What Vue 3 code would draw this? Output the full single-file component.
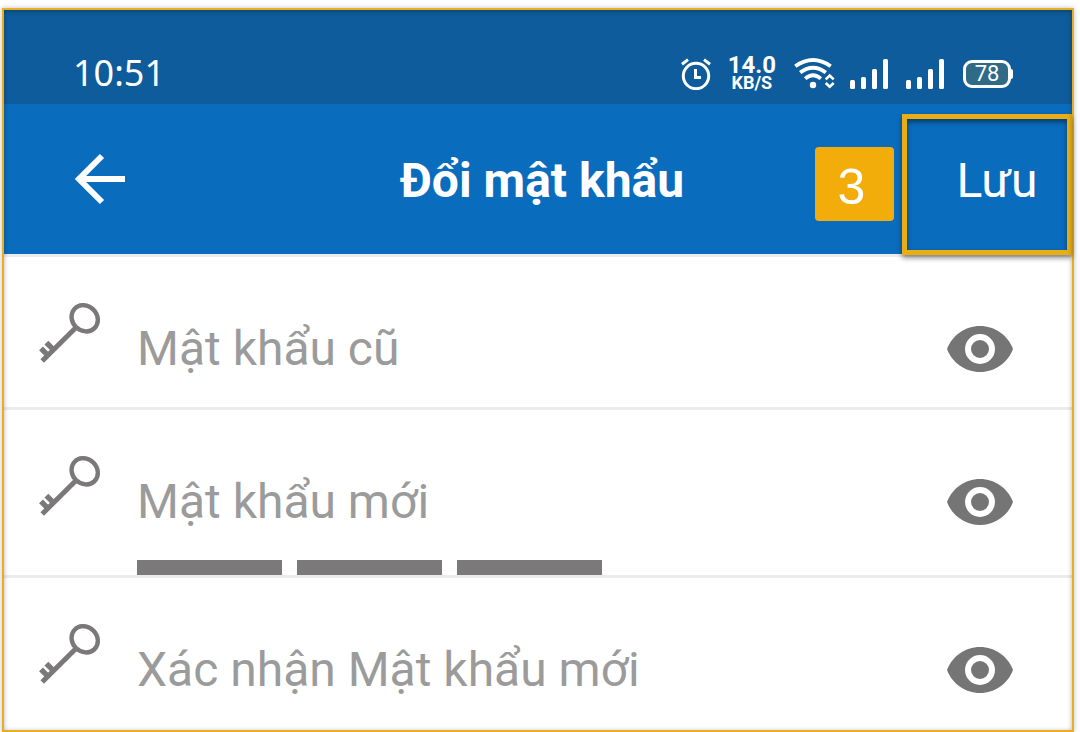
<script setup>
import { reactive } from 'vue'

const fields = reactive([
  { id: 'old-password', label: 'Mật khẩu cũ', value: '', visible: false, meter: false },
  { id: 'new-password', label: 'Mật khẩu mới', value: '', visible: false, meter: true },
  { id: 'confirm-password', label: 'Xác nhận Mật khẩu mới', value: '', visible: false, meter: false },
])
</script>

<template>
  <main class="screen">
    <div class="status">
      <time class="clock">10:51</time>
      <div class="indicators">
        <svg class="alarm" width="30" height="32" viewBox="0 0 30 32" fill="none" stroke="#fff" aria-hidden="true">
          <circle cx="15" cy="18" r="12.7" stroke-width="3" />
          <path d="M14.5 11v8.5H20" stroke-width="3" />
          <path d="M1 6.2L7 1.6M23 1.6L29 6.2" stroke-width="3" />
        </svg>
        <div class="speed">
          <span class="rate">14.0</span>
          <span class="unit">KB/S</span>
        </div>
        <svg class="wifi" width="41" height="32" viewBox="0 0 41 32" fill="none" stroke="#fff" aria-hidden="true">
          <path d="M1.3 8.2Q19 -4.2 36.7 8.2" stroke-width="3.8" />
          <path d="M6.2 14.6Q19 4.8 31.8 14.6" stroke-width="3.8" />
          <path d="M11.2 20.6Q19 14 26.8 20.6" stroke-width="3.8" />
          <circle cx="19" cy="27" r="3.2" fill="#fff" stroke="none" />
          <path d="M31.7 21.4l4-3.8 4 3.8M31.7 25l4 3.8 4-3.8" stroke-width="2.6" />
        </svg>
        <svg v-for="n in 2" :key="n" class="signal" width="38" height="30" viewBox="0 0 38 30" fill="#fff" aria-hidden="true">
          <rect x="0" y="21" width="5" height="9" rx="1.5" />
          <rect x="11" y="18" width="5" height="12" rx="1.5" />
          <rect x="22" y="10" width="5" height="20" rx="1.5" />
          <rect x="33" y="0" width="5" height="30" rx="1.5" />
        </svg>
        <div class="battery"><span class="level">78</span></div>
      </div>
    </div>

    <header class="bar">
      <button class="back" type="button" aria-label="Quay lại">
        <svg width="52" height="52" viewBox="0 0 52 52" fill="none" stroke="#fff" stroke-width="6" aria-hidden="true">
          <path d="M28 3L5 26l23 23M6 26h45" />
        </svg>
      </button>
      <h1 class="title">Đổi mật khẩu</h1>
      <div class="actions">
        <span class="step">3</span>
        <button class="save" type="submit" form="password-form">Lưu</button>
      </div>
    </header>

    <form id="password-form" class="form" @submit.prevent>
      <div v-for="f in fields" :key="f.id" class="row">
        <label class="key" :for="f.id" :aria-label="f.label">
          <svg width="62" height="60" viewBox="0 0 62 60" fill="none" stroke="#7a7878" aria-hidden="true">
            <ellipse cx="45.7" cy="15.3" rx="13.9" ry="12.3" stroke-width="4.4" transform="rotate(45 45.7 15.3)" />
            <path d="M37 24.5L3.2 58" stroke-width="5" />
            <path d="M7.400 39.700l8 8M2 45.300l8 8" stroke-width="5.400" />
          </svg>
        </label>
        <input :id="f.id" v-model="f.value" class="input" :type="f.visible ? 'text' : 'password'" :placeholder="f.label" />
        <button class="eye" type="button" :aria-label="'Hiện ' + f.label" @click="f.visible = !f.visible">
          <svg width="66" height="46" viewBox="0 0 66 46" aria-hidden="true">
            <path d="M0 23C5 9.500 18 0 33 0S61 9.500 66 23C61 36.500 48 46 33 46S5 36.500 0 23z" fill="#757575" />
            <circle cx="33" cy="23" r="12" fill="#757575" stroke="#fff" stroke-width="6" />
          </svg>
        </button>
        <div v-if="f.meter" class="meter">
          <span v-for="n in 3" :key="n" class="segment"></span>
        </div>
      </div>
    </form>
  </main>
</template>

<style>
body {
  background: #fff;
}
</style>

<style scoped>
.screen {
  position: relative;
  margin: 8px 6px 0 2px;
  border: 2px solid #e9ae22;
  background: #fff;
  box-shadow: 0 0 5px rgba(0, 0, 0, 0.25);
  font-family: Roboto, "Noto Sans", sans-serif;
}
.screen::after {
  content: "";
  position: absolute;
  inset: 0;
  pointer-events: none;
  box-shadow: inset 0 1px 5px rgba(0, 0, 0, 0.3);
}
button {
  padding: 0;
  border: 0;
  background: none;
  color: inherit;
  font: inherit;
  cursor: pointer;
}
svg {
  display: block;
}
.status {
  display: flex;
  align-items: center;
  justify-content: space-between;
  height: 60px;
  padding: 34px 61px 0 69px;
  background: #0e5c9b;
  color: #fff;
}
.clock {
  font-family: "Noto Sans", sans-serif;
  font-size: 36px;
  line-height: 56px;
  padding-bottom: 2px;
}
.indicators {
  display: flex;
  align-items: center;
  gap: 18px;
}
.alarm {
  margin-right: -1px;
}
.speed {
  display: flex;
  flex-direction: column;
  align-items: center;
  font-weight: 700;
}
.rate {
  font-size: 24px;
  line-height: 18px;
}
.unit {
  font-size: 18px;
  line-height: 18px;
}
.wifi {
  margin-right: -3px;
}
.battery {
  position: relative;
  display: flex;
  align-items: center;
  justify-content: center;
  box-sizing: border-box;
  width: 48px;
  height: 28px;
  margin-left: 1px;
  border: 3px solid #fff;
  border-radius: 9px;
  background: #2f6a86;
}
.battery::after {
  content: "";
  position: absolute;
  right: -5px;
  width: 3px;
  height: 10px;
  border-radius: 0 2px 2px 0;
  background: #fff;
}
.level {
  font-size: 22px;
  line-height: 22px;
}
.bar {
  display: grid;
  grid-template-columns: 1fr auto 1fr;
  align-items: center;
  height: 150px;
  padding-left: 8px;
  background: #0a6cbd;
  color: #fff;
}
.back {
  justify-self: start;
  margin-left: 62px;
}
.title {
  margin: 0;
  padding-top: 4px;
  font-size: 48px;
  line-height: 60px;
  font-weight: 700;
  white-space: nowrap;
}
.actions {
  position: relative;
  display: flex;
  align-items: center;
  align-self: end;
  justify-self: end;
  gap: 8px;
  height: 140px;
}
.step {
  box-sizing: border-box;
  width: 79px;
  height: 74px;
  padding-right: 6px;
  border-radius: 4px;
  background: #f2ad0a;
  font-family: "Liberation Sans", Arial, sans-serif;
  font-size: 50px;
  line-height: 80px;
  text-align: center;
}
.save {
  align-self: start;
  box-sizing: border-box;
  width: 170px;
  height: 141px;
  padding: 0 0 8px 20px;
  border: 5px solid #e9ae15;
  box-shadow: 0 3px 5px rgba(0, 0, 0, 0.45), inset 0 3px 5px rgba(0, 0, 0, 0.45);
  font-size: 48px;
}
.form {
  border-top: 3px solid #ececec;
}
.row {
  display: grid;
  grid-template-columns: 62px 1fr 66px;
  column-gap: 36px;
  padding: 0 59px 0 35px;
  border-bottom: 3px solid #ececec;
}
.row:last-child {
  padding-bottom: 2px;
  border-bottom: 0;
}
.key {
  padding-top: 46px;
}
.input {
  width: 100%;
  min-width: 0;
  height: 60px;
  margin: 62px 0 28px;
  padding: 0;
  border: 0;
  outline: none;
  background: transparent;
  color: #555;
  font: 400 48px/60px Roboto, "Noto Sans", sans-serif;
}
.input::placeholder {
  color: #9b9b9b;
  opacity: 1;
}
.eye {
  align-self: start;
  margin-top: 69px;
}
.meter {
  grid-column: 2;
  display: flex;
  gap: 15px;
}
.segment {
  width: 145px;
  height: 15px;
  background: #7b7979;
}
</style>
